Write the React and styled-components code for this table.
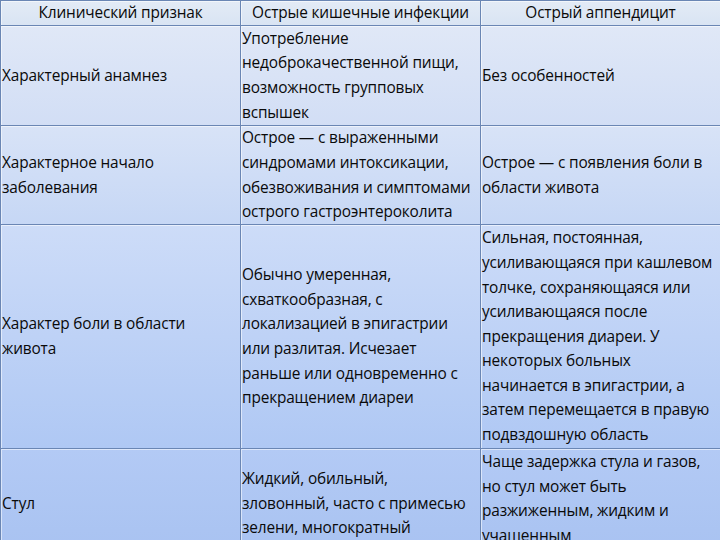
import React from 'react';
import styled, { createGlobalStyle } from 'styled-components';

const Global = createGlobalStyle`
	html, body {
		margin: 0;
		padding: 0;
		width: 720px;
		height: 540px;
		overflow: hidden;
		background: #ffffff;
	}
	body {
		font-family: 'Open Sans', 'Liberation Sans', sans-serif;
		color: #0a0a0a;
	}
`;

const Table = styled.div`
	display: grid;
	grid-template-columns: 240px 240px 240px;
	grid-template-rows: 25px 100px 99px 224px 110px;
	width: 720px;
	border-top: 1px solid #6a86b4;
	border-left: 1px solid #6a86b4;
	box-sizing: border-box;
`;

const Cell = styled.div`
	box-sizing: border-box;
	border-right: 1px solid #6a86b4;
	border-bottom: 1px solid #6a86b4;
	background: linear-gradient(${(p) => p.$from}, ${(p) => p.$to});
	box-shadow: inset 1px 1px 0 rgba(255, 255, 255, 0.55);
	display: flex;
	flex-direction: column;
	justify-content: ${(p) => (p.$top ? 'flex-start' : 'center')};
	align-items: ${(p) => (p.$head ? 'center' : 'flex-start')};
	padding: ${(p) => (p.$head ? '0' : '1px 0 0 1px')};
	font-size: 15.4px;
	line-height: 24.6px;
	white-space: nowrap;
	overflow: hidden;
	letter-spacing: -0.15px;
`;

const Line = styled.span`
	display: block;
`;

const rows = [
	{
		from: '#e3ebf6',
		to: '#d9e4f3',
		head: true,
		cells: [['Клинический признак'], ['Острые кишечные инфекции'], ['Острый аппендицит']],
	},
	{
		from: '#e0e8f7',
		to: '#d2def5',
		cells: [
			['Характерный анамнез'],
			['Употребление', 'недоброкачественной пищи,', 'возможность групповых', 'вспышек'],
			['Без особенностей'],
		],
	},
	{
		from: '#d8e3f7',
		to: '#c6d7f5',
		cells: [
			['Характерное начало', 'заболевания'],
			['Острое — с выраженными', 'синдромами интоксикации,', 'обезвоживания и симптомами', 'острого гастроэнтероколита'],
			['Острое — с появления боли в', 'области живота'],
		],
	},
	{
		from: '#cddcf8',
		to: '#afc8f4',
		cells: [
			['Характер боли в области', 'живота'],
			[
				'Обычно умеренная,',
				'схваткообразная, с',
				'локализацией в эпигастрии',
				'или разлитая. Исчезает',
				'раньше или одновременно с',
				'прекращением диареи',
			],
			[
				'Сильная, постоянная,',
				'усиливающаяся при кашлевом',
				'толчке, сохраняющаяся или',
				'усиливающаяся после',
				'прекращения диареи. У',
				'некоторых больных',
				'начинается в эпигастрии, а',
				'затем перемещается в правую',
				'подвздошную область',
			],
		],
	},
	{
		from: '#b3caf5',
		to: '#a8c2f1',
		cells: [
			['Стул'],
			['Жидкий, обильный,', 'зловонный, часто с примесью', 'зелени, многократный'],
			['Чаще задержка стула и газов,', 'но стул может быть', 'разжиженным, жидким и', 'учащенным'],
		],
		lastTop: true,
	},
];

const App = () => {
	return (
		<>
			<Global />
			<Table>
				{rows.map((row, r) =>
					row.cells.map((lines, c) => (
						<Cell
							key={`${r}-${c}`}
							$from={row.from}
							$to={row.to}
							$head={row.head}
							$top={row.lastTop && c === 2}
						>
							{lines.map((t, i) => (
								<Line key={i}>{t}</Line>
							))}
						</Cell>
					))
				)}
			</Table>
		</>
	);
};

export default App;
